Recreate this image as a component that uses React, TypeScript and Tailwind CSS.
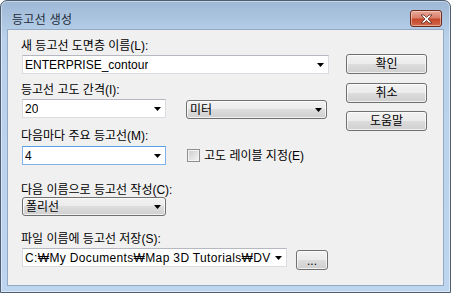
const font = "font-['Liberation_Sans','Noto_Sans_CJK_KR',sans-serif]";

function Arrow() {
  return (
    <svg width="7" height="4" viewBox="0 0 7 4" className="shrink-0">
      <path d="M0 0h7L3.5 4z" fill="#000" />
    </svg>
  );
}

function Combo({
  value,
  width,
  focused,
  textClass = "",
}: {
  value: string;
  width: string;
  focused?: boolean;
  textClass?: string;
}) {
  return (
    <div
      className={`${width} h-[19px] flex items-center justify-between bg-white border pl-[2px] pr-[4px] ${
        focused ? "border-[#7eb4ea] border-t-[#569de5]" : "border-[#dadce2] border-t-[#b5b8c0]"
      }`}
    >
      <span className={`overflow-hidden whitespace-nowrap leading-[14px] ${textClass}`}>{value}</span>
      <Arrow />
    </div>
  );
}

function DropList({ value, width, className = "" }: { value: string; width: string; className?: string }) {
  return (
    <div
      className={`${width} h-[19px] rounded-[3px] border border-[#707070] bg-[linear-gradient(to_bottom,#f2f2f2_0%,#ebebeb_50%,#dddddd_50%,#cfcfcf_100%)] shadow-[inset_0_0_0_1px_rgba(255,255,255,0.7)] flex items-center justify-between pl-[3px] pr-[4px] ${className}`}
    >
      <span className="leading-[14px]">{value}</span>
      <Arrow />
    </div>
  );
}

function Btn({ label, className = "" }: { label: string; className?: string }) {
  return (
    <div
      className={`h-[20px] rounded-[3px] border border-[#707070] bg-[linear-gradient(to_bottom,#f2f2f2_0%,#ebebeb_50%,#dddddd_50%,#cfcfcf_100%)] shadow-[inset_0_0_0_1px_rgba(255,255,255,0.7)] flex items-center justify-center leading-[14px] ${className}`}
    >
      {label}
    </div>
  );
}

function Label({ text, className = "" }: { text: string; className?: string }) {
  return <div className={`h-[14px] leading-[14px] -ml-px ${className}`}>{text}</div>;
}

export default function App() {
  return (
    <div
      className={`${font} text-[12px] text-black w-[451px] h-[293px] rounded-t-[7px] border border-[#4f5e70] bg-[linear-gradient(to_bottom,#9db8d6,#b9d1ea_36px,#bdd5ee)] shadow-[inset_0_0_0_1px_rgba(255,255,255,0.45)] flex flex-col px-[6px] pb-[6px]`}
    >
      {/* title bar */}
      <div className="h-[28px] flex items-start justify-between pl-[5px] pr-[2px]">
        <span className="mt-[12px] leading-[14px] tracking-[0.3px] text-[#1e2a38]">등고선 생성</span>
        <div className="mt-[9px] w-[32px] h-[17px] rounded-[3px] border border-[#6b2b1f] bg-[linear-gradient(to_bottom,#e9a898_0%,#d9806c_45%,#c5472c_55%,#d2684a_100%)] shadow-[inset_0_0_0_1px_rgba(255,230,220,0.5)] flex items-center justify-center">
          <svg width="13" height="10" viewBox="0 0 13 10">
            <path
              d="M1 1h3l2.5 2.5L9 1h3L8 5l4 4H9L6.5 6.5 4 9H1l4-4z"
              fill="#fff"
              stroke="#5a2a22"
              strokeWidth="0.8"
              strokeLinejoin="round"
            />
          </svg>
        </div>
      </div>

      {/* client area */}
      <div className="flex-1 bg-[#f0f0f0] border border-[#94aac4] flex pl-[14px]">
        <div className="w-[307px] flex flex-col">
          <Label text="새 등고선 도면층 이름(L):" className="mt-[9px]" />
          <div className="mt-[2px]">
            <Combo value="ENTERPRISE_contour" width="w-[307px]" />
          </div>

          <Label text="등고선 고도 간격(I):" className="mt-[9px]" />
          <div className="mt-[2px] flex items-start gap-[20px]">
            <Combo value="20" width="w-[144px]" />
            <DropList value="미터" width="w-[141px]" className="mt-px" />
          </div>

          <Label text="다음마다 주요 등고선(M):" className="mt-[10px]" />
          <div className="mt-[3px] flex items-center">
            <Combo value="4" width="w-[144px]" focused />
            <div className="ml-[21px] w-[13px] h-[13px] border border-[#8e8f8f] bg-[linear-gradient(135deg,#cbcbcb,#f6f6f6)] shadow-[inset_0_0_0_1px_#f4f4f4]" />
            <span className="ml-[4px] leading-[14px]">고도 레이블 지정(E)</span>
          </div>

          <Label text="다음 이름으로 등고선 작성(C):" className="mt-[18px]" />
          <div className="mt-[0px]">
            <DropList value="폴리선" width="w-[144px]" />
          </div>

          <Label text="파일 이름에 등고선 저장(S):" className="mt-[16px]" />
          <div className="mt-[2px] flex items-start gap-[9px]">
            <Combo
              value="C:₩My Documents₩Map 3D Tutorials₩DV"
              width="w-[265px]"
              textClass="tracking-[0.35px]"
            />
            <Btn label="..." className="mt-[2px] w-[32px] h-[16px] items-end pb-[1px]" />
          </div>
        </div>

        <div className="ml-[17px] w-[81px] flex flex-col">
          <Btn label="확인" className="mt-[24px]" />
          <Btn label="취소" className="mt-[9px]" />
          <Btn label="도움말" className="mt-[8px]" />
        </div>
      </div>
    </div>
  );
}
